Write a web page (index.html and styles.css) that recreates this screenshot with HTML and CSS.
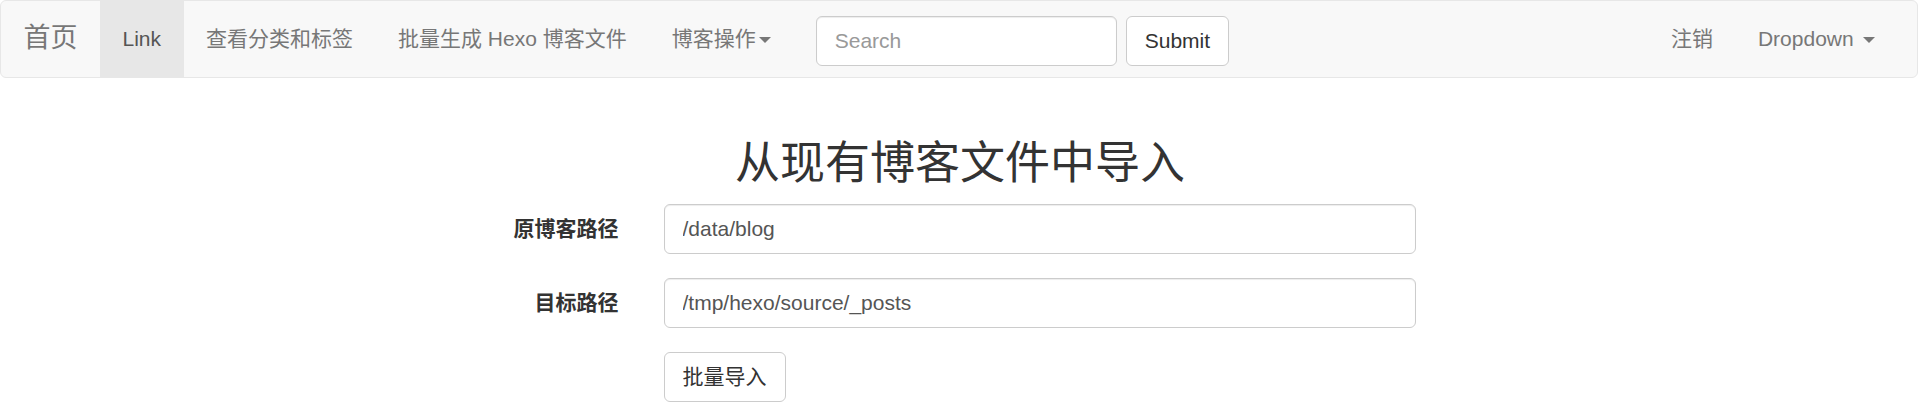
FILE: index.html
```html
<!DOCTYPE html>
<html lang="zh-CN">
<head>
<meta charset="utf-8">
<title>从现有博客文件中导入</title>
<link rel="stylesheet" href="styles.css">
</head>
<body>
<nav class="navbar">
  <a class="brand" href="#">首页</a>
  <ul class="nav">
    <li class="active"><a href="#">Link</a></li>
    <li><a href="#">查看分类和标签</a></li>
    <li><a href="#">批量生成 Hexo 博客文件</a></li>
    <li><a href="#">博客操作<span class="caret caret-tight"></span></a></li>
  </ul>
  <form class="navbar-form">
    <input class="nav-input" type="text" placeholder="Search">
    <button class="btn nav-btn" type="button">Submit</button>
  </form>
  <ul class="nav nav-right">
    <li><a href="#">注销</a></li>
    <li><a href="#">Dropdown <span class="caret"></span></a></li>
  </ul>
</nav>
<main class="page">
  <h2 class="title">从现有博客文件中导入</h2>
  <form class="import-form">
    <div class="form-group">
      <label class="control-label">原博客路径</label>
      <div class="field"><input class="form-control" type="text" value="/data/blog"></div>
    </div>
    <div class="form-group">
      <label class="control-label">目标路径</label>
      <div class="field"><input class="form-control" type="text" value="/tmp/hexo/source/_posts"></div>
    </div>
    <div class="form-group">
      <span class="control-label"></span>
      <div class="field"><button class="btn" type="button">批量导入</button></div>
    </div>
  </form>
</main>
</body>
</html>
```
FILE: styles.css
```css
* { box-sizing: border-box; }
html, body { margin: 0; padding: 0; }
body {
  font-family: "Liberation Sans", "Noto Sans CJK SC", sans-serif;
  font-size: 21px;
  line-height: 30px;
  color: #333;
  background: #fff;
}
a { text-decoration: none; }

.navbar {
  display: flex;
  align-items: stretch;
  height: 78px;
  margin: 0 2px 31px 0;
  background: #f8f8f8;
  border: 1px solid #e7e7e7;
  border-radius: 6px;
  padding-right: 20px;
}
.brand {
  display: block;
  padding: 22px 22.5px 0;
  font-size: 27px;
  line-height: 30px;
  color: #777;
}
.nav {
  display: flex;
  list-style: none;
  margin: 0;
  padding: 0;
}
.nav li a {
  display: block;
  height: 76px;
  padding: 23px 22.5px 0;
  line-height: 30px;
  color: #777;
  white-space: nowrap;
}
.nav li.active a {
  background: #e7e7e7;
  color: #555;
}
.caret {
  display: inline-block;
  width: 0;
  height: 0;
  margin-left: 3px;
  vertical-align: middle;
  border-top: 6px solid #777;
  border-left: 6px solid transparent;
  border-right: 6px solid transparent;
}
.nav-right { margin-left: auto; }

.navbar-form {
  display: flex;
  gap: 9px;
  padding: 15px 22.5px 0;
  margin: 0;
}
.nav-input {
  width: 301px;
  height: 50px;
  padding: 0 18px;
  font-family: "Liberation Sans", "Noto Sans CJK SC", sans-serif;
  font-size: 21px;
  color: #555;
  background: #fff;
  border: 1px solid #ccc;
  border-radius: 6px;
  box-shadow: inset 0 1px 1px rgba(0,0,0,.075);
}
.nav-input::placeholder, .form-control::placeholder { color: #999; }

.btn {
  display: inline-block;
  height: 50px;
  padding: 0 18px;
  font-family: "Liberation Sans", "Noto Sans CJK SC", sans-serif;
  font-size: 21px;
  line-height: 30px;
  color: #333;
  background: #fff;
  border: 1px solid #ccc;
  border-radius: 6px;
}

.page { display: flow-root; }
.title {
  margin: 30px 0 15px;
  text-align: center;
  font-size: 45px;
  line-height: 49.5px;
  font-weight: 400;
  color: #333;
}
.import-form {
  width: 957px;
  margin: 0 auto;
}
.form-group {
  display: grid;
  grid-template-columns: 159.5px 1fr;
  margin-bottom: 24px;
}
.control-label {
  padding: 10px 22.5px 0;
  text-align: right;
  font-weight: bold;
  color: #333;
}
.field { padding: 0 22.5px; }
.form-control {
  display: block;
  width: 100%;
  height: 50px;
  padding: 0 18px;
  font-family: "Liberation Sans", "Noto Sans CJK SC", sans-serif;
  font-size: 21px;
  color: #555;
  background: #fff;
  border: 1px solid #ccc;
  border-radius: 6px;
  box-shadow: inset 0 1px 1px rgba(0,0,0,.075);
}
```
